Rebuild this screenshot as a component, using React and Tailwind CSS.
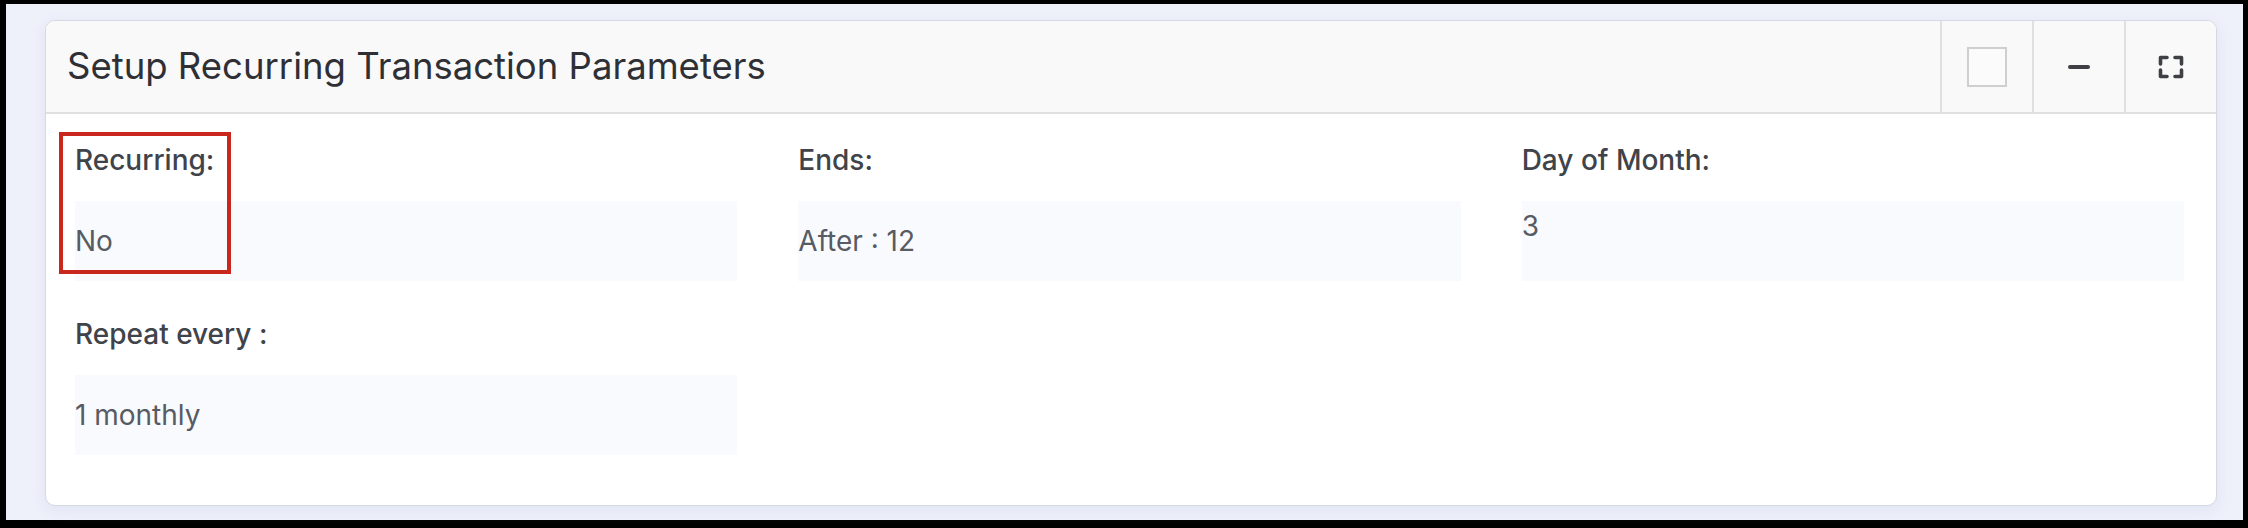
import React from "react";

function Field({ label, value, top = false, highlight = false }) {
  return (
    <div className="relative flex flex-col">
      {highlight && (
        <div className="absolute left-[-16px] top-[-7px] w-[172px] h-[142px] border-[4px] border-[#c9271d] pointer-events-none" />
      )}
      <div className="text-[28px] leading-[42px] font-medium text-[#404349]">{label}</div>
      <div
        className={
          "mt-[20px] h-[80px] bg-[#f9fafd] text-[28px] leading-[42px] text-[#575b63] flex " +
          (top ? "items-start pt-[4px]" : "items-center")
        }
      >
        {value}
      </div>
    </div>
  );
}

export default function App() {
  return (
    <div className="w-[2248px] h-[528px] bg-black pt-[4px] pl-[6px] pr-[5px] pb-[8px] font-['Inter',sans-serif]">
      <div className="h-full bg-[#eef0fa] pt-[16px] pl-[39px] pr-[26px]">
        <div className="rounded-[10px] border border-[#d5d8df] bg-white overflow-hidden shadow-[0_4px_14px_rgba(200,205,235,0.35)]">
          <div className="h-[93px] flex items-stretch bg-[#f9f9f9] border-b-2 border-[#e0e0e2]">
            <div className="flex-1 flex items-center pl-[21px] text-[36.5px] text-[#2e3035]">
              Setup Recurring Transaction Parameters
            </div>
            <div className="w-[92px] border-l-2 border-[#e0e0e2] flex items-center justify-center">
              <div className="w-[40px] h-[40px] border-2 border-[#cfcfcf] bg-[#fbfbfb]" />
            </div>
            <div className="w-[92px] border-l-2 border-[#e0e0e2] flex items-center justify-center">
              <div className="w-[22px] h-[4px] rounded-full bg-[#3f4046]" />
            </div>
            <div className="w-[92px] border-l-2 border-[#e0e0e2] flex items-center justify-center">
              <svg width="26" height="24" viewBox="0 0 26 24" fill="none" stroke="#3f4046" strokeWidth="3.6" strokeLinecap="round" strokeLinejoin="round">
                <path d="M2.5 9V2.5H9" />
                <path d="M17 2.5H23.5V9" />
                <path d="M2.5 15V21.5H9" />
                <path d="M17 21.5H23.5V15" />
              </svg>
            </div>
          </div>
          <div className="pl-[29px] pr-[32px] pt-[25px] pb-[50px] grid grid-cols-3 gap-x-[61px] gap-y-[32px]">
            <Field label="Recurring:" value="No" highlight />
            <Field label="Ends:" value="After : 12" />
            <Field label="Day of Month:" value="3" top />
            <Field label="Repeat every :" value="1 monthly" />
          </div>
        </div>
      </div>
    </div>
  );
}
